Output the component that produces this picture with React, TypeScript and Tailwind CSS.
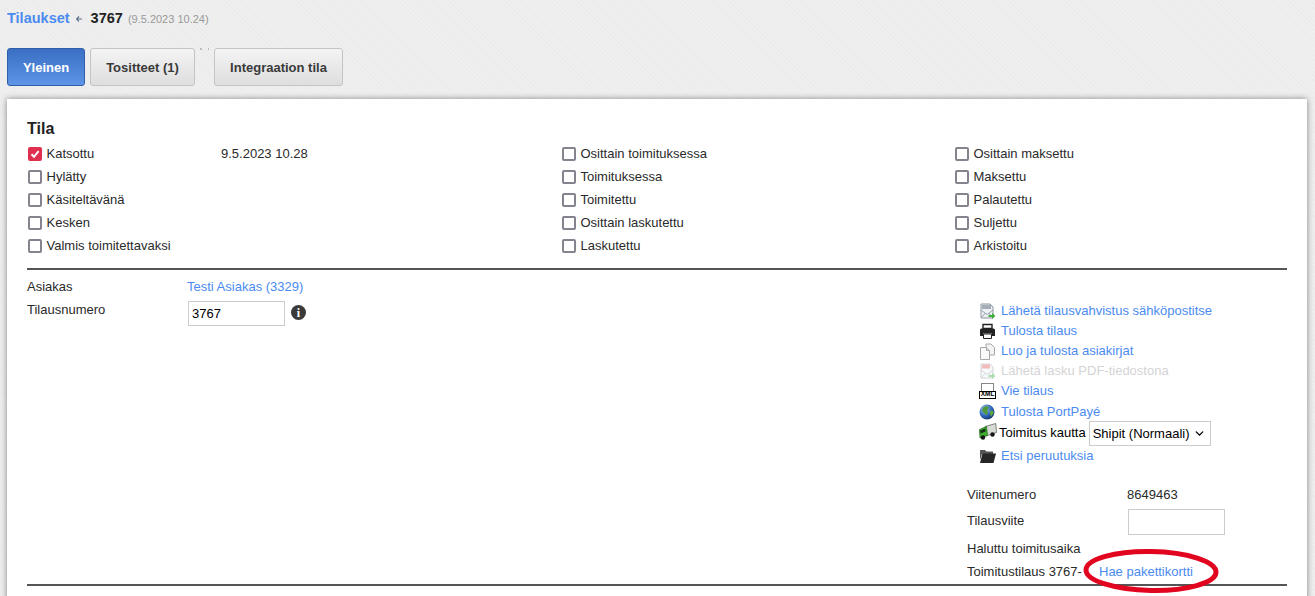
import { ReactNode } from "react";
import { ChevronDown } from "lucide-react";

const col1 = ["Katsottu", "Hylätty", "Käsiteltävänä", "Kesken", "Valmis toimitettavaksi"];
const col2 = ["Osittain toimituksessa", "Toimituksessa", "Toimitettu", "Osittain laskutettu", "Laskutettu"];
const col3 = ["Osittain maksettu", "Maksettu", "Palautettu", "Suljettu", "Arkistoitu"];

function Check({ label, checked }: { label: string; checked?: boolean }) {
  return (
    <div className="flex h-[23px] items-center">
      {checked ? (
        <span className="ml-px flex h-[14px] w-[14px] items-center justify-center rounded-[2px] bg-[#e0304f]">
          <svg width="10" height="10" viewBox="0 0 10 10">
            <path d="M1.5 5.2 4 7.8 8.6 2.2" fill="none" stroke="#fff" strokeWidth="2" />
          </svg>
        </span>
      ) : (
        <span className="ml-px h-[14px] w-[14px] rounded-[2px] border-2 border-[#86828e] bg-white" />
      )}
      <span className="ml-[4.5px] text-[13px] text-[#2a2a2a]">{label}</span>
    </div>
  );
}

function MailIcon({ faded }: { faded?: boolean }) {
  return (
    <svg width="17" height="17" viewBox="0 0 17 17" className={faded ? "opacity-40" : ""}>
      <path d="M2 1h9l3 3v11H2z" fill="#eef1f4" stroke="#8b95a0" />
      {faded ? <rect x="3" y="1.5" width="8" height="4" fill="#e05a5a" /> : <rect x="3" y="2" width="9" height="4" fill="#a4adb7" />}
      <path d="M2 7l6 4.500L14 7M2 15l4.500-5M14 15l-4.500-5" fill="none" stroke="#98a2ad" />
      <path d="M9.500 12h3.500v-2l3.500 3-3.500 3v-2H9.500z" fill="#3fae3f" />
    </svg>
  );
}

function PrinterIcon() {
  return (
    <svg width="17" height="17" viewBox="0 0 17 17">
      <path d="M4 1.500h9v4H4z" fill="#fff" stroke="#222" strokeWidth="1.4" />
      <path d="M2.500 5.500h12a1.500 1.500 0 0 1 1.500 1.500v6h-3v-2.500H4V13H1V7a1.500 1.500 0 0 1 1.500-1.500z" fill="#222" />
      <path d="M4.500 11h8v4.500h-8z" fill="#fff" stroke="#222" />
    </svg>
  );
}

function DocsIcon() {
  return (
    <svg width="17" height="17" viewBox="0 0 17 17">
      <path d="M7 1h5l3.500 3.500V12H7z" fill="#f4f4f4" stroke="#a8a8a8" />
      <path d="M1.500 4.500h6l3 3v9h-9z" fill="#fafafa" stroke="#a8a8a8" />
      <path d="M7.500 4.500v3h3" fill="#ddd" stroke="#a8a8a8" />
    </svg>
  );
}

function XmlIcon() {
  return (
    <div className="relative h-[17px] w-[17px]">
      <div className="absolute left-[2px] top-0 h-[10px] w-[13px] border border-[#888] bg-white" />
      <div className="absolute bottom-[1px] left-0 flex h-[8px] w-[17px] items-center justify-center border border-black bg-white text-[6.5px] font-bold leading-none text-black">
        XML
      </div>
    </div>
  );
}

function GlobeIcon() {
  return (
    <svg width="16" height="16" viewBox="0 0 16 16">
      <defs>
        <radialGradient id="globe" cx="0.35" cy="0.3" r="0.8">
          <stop offset="0" stopColor="#9cc4ef" />
          <stop offset="0.6" stopColor="#2b62b5" />
          <stop offset="1" stopColor="#12305f" />
        </radialGradient>
      </defs>
      <circle cx="8" cy="8" r="7.500" fill="url(#globe)" />
      <path d="M4 3.500 8 2l2 2-2 2.500 1 2-1.500 3L5.500 9 3 7z" fill="#4f9a3a" />
      <path d="M11 7l3-.5.5 3-2.500 3-1-2.500z" fill="#5ea544" />
    </svg>
  );
}

function TruckIcon() {
  return (
    <svg width="18" height="17" viewBox="0 0 18 17">
      <path d="M6 3.500 16.800.5 17.500 9.500 7 13z" fill="#d8dad4" stroke="#55584f" strokeWidth="0.7" />
      <path d="M.5 6.500 7.500 3.500 8.500 12.500 1 15z" fill="#3fb12c" stroke="#1c5f15" strokeWidth="0.7" />
      <path d="M1.200 7.500 6.300 5.500 6.600 8.600 1.600 10.400z" fill="#12301a" />
      <circle cx="4" cy="14.500" r="2.200" fill="#161616" />
      <circle cx="13.500" cy="11.500" r="2.200" fill="#161616" />
    </svg>
  );
}

function FolderIcon() {
  return (
    <svg width="17" height="17" viewBox="0 0 17 17">
      <path d="M1 2h5l1.500 1.500H14V6H3L1 12z" fill="#555" />
      <path d="M3.500 5.500H17L14.500 15H1z" fill="#262626" />
    </svg>
  );
}

function LinkRow({ icon, label, faded, className }: { icon: ReactNode; label: string; faded?: boolean; className?: string }) {
  return (
    <div className={`flex h-[20px] items-center ${className ?? ""}`}>
      <span className="flex w-[22px] shrink-0 items-center">{icon}</span>
      <a className={`text-[13px] ${faded ? "text-[#d4d4d4]" : "text-[#4b8bf0]"}`}>{label}</a>
    </div>
  );
}

function Tab({ label, active, className }: { label: string; active?: boolean; className?: string }) {
  return (
    <button
      className={`h-[38px] rounded-[3px] border pt-[2px] text-[13px] font-bold ${
        active
          ? "border-[#2f5fa8] bg-gradient-to-b from-[#3a6fc4] to-[#5e95e6] text-white"
          : "border-[#c4c4c4] bg-gradient-to-b from-[#f4f4f4] to-[#dedede] text-[#3a3a3a]"
      } ${className ?? ""}`}
    >
      {label}
    </button>
  );
}

export default function App() {
  return (
    <div className="relative h-[596px] overflow-hidden bg-[repeating-linear-gradient(45deg,#ebebeb_0,#ebebeb_1px,#efefef_1px,#efefef_3px)] font-['Liberation_Sans',Arial,sans-serif]">
      <div className="flex h-[38px] items-center pl-[7px]">
        <a className="text-[14.5px] font-bold text-[#4b8bf0]">Tilaukset</a>
        <svg width="6" height="6" viewBox="0 0 6 6" className="ml-[6px]">
          <path d="M3 .5 .5 3 3 5.500M.5 3H6" fill="none" stroke="#5a6f8a" strokeWidth="1.1" />
        </svg>
        <span className="ml-[9px] text-[14.5px] font-bold text-[#222]">3767</span>
        <span className="ml-[5px] mt-[1px] text-[11px] text-[#999]">(9.5.2023 10.24)</span>
      </div>

      <div className="mt-[10px] flex h-[38px] pl-[7px]">
        <Tab label="Yleinen" active className="w-[78px]" />
        <Tab label="Tositteet (1)" className="ml-[5px] w-[105px]" />
        <span className="ml-[5px] flex h-[2px] w-[9px] justify-between">
          <i className="h-[1.500px] w-[1.500px] bg-[#bbb]" />
          <i className="h-[1.500px] w-[1.500px] bg-[#bbb]" />
        </span>
        <Tab label="Integraation tila" className="ml-[5px] w-[129px]" />
      </div>

      <div className="ml-[7px] mt-[13px] w-[1300px] bg-white px-[20px] pb-[20px] pt-[20px] shadow-[0_0_6px_rgba(0,0,0,0.45)]">
        <h2 className="h-[23px] text-[16px] font-bold leading-[19px] text-[#222]">Tila</h2>

        <div className="flex h-[115px]">
          <div className="relative w-[534px]">
            {col1.map((label, i) => (
              <Check key={label} label={label} checked={i === 0} />
            ))}
            <span className="absolute left-[194px] top-[2px] text-[13px] text-[#2a2a2a]">9.5.2023 10.28</span>
          </div>
          <div className="w-[393px]">
            {col2.map((label) => (
              <Check key={label} label={label} />
            ))}
          </div>
          <div className="flex-1">
            {col3.map((label) => (
              <Check key={label} label={label} />
            ))}
          </div>
        </div>

        <div className="mt-[11px] h-[2px] bg-[#555]" />

        <div className="flex h-[314px]">
          <div className="w-[940px] pt-[9px] text-[13px] text-[#2a2a2a]">
            <div className="flex h-[16px] items-center">
              <span className="w-[160px]">Asiakas</span>
              <a className="text-[#4b8bf0]">Testi Asiakas (3329)</a>
            </div>
            <div className="mt-[6px] flex items-start">
              <span className="mt-px h-[16px] w-[161px] leading-[16px]">Tilausnumero</span>
              <input
                readOnly
                value="3767"
                className="h-[25px] w-[97px] border border-[#ccc] px-[3px] font-['Liberation_Sans',Arial,sans-serif] text-[13px] text-black"
              />
              <span className="ml-[6px] mt-[4px] flex h-[15px] w-[15px] items-center justify-center rounded-full bg-[#3a3a3a] font-['Liberation_Serif',serif] text-[12px] font-bold text-white">
                i
              </span>
            </div>
          </div>

          <div className="flex-1 pt-[31px] text-[13px] text-[#2a2a2a]">
            <div className="ml-[12px]">
              <LinkRow icon={<MailIcon />} label="Lähetä tilausvahvistus sähköpostitse" />
              <LinkRow icon={<PrinterIcon />} label="Tulosta tilaus" />
              <LinkRow icon={<DocsIcon />} label="Luo ja tulosta asiakirjat" />
              <LinkRow icon={<MailIcon faded />} label="Lähetä lasku PDF-tiedostona" faded />
              <LinkRow icon={<XmlIcon />} label="Vie tilaus" />
              <LinkRow icon={<GlobeIcon />} label="Tulosta PortPayé" className="mt-px" />
              <div className="-mt-px flex h-[25px] items-center">
                <span className="mb-[4px] w-[20px]">
                  <TruckIcon />
                </span>
                <span className="mb-px text-black">Toimitus kautta</span>
                <div className="ml-[3px] flex h-[25px] w-[122px] items-center justify-between border border-[#ccc] bg-white pl-[3px] pr-[4px] text-[13px] text-black">
                  Shipit (Normaali)
                  <ChevronDown size={13} strokeWidth={2.5} />
                </div>
              </div>
              <LinkRow icon={<FolderIcon />} label="Etsi peruutuksia" />
            </div>

            <div className="mt-[21px] flex h-[16px] items-center">
              <span className="w-[160px]">Viitenumero</span>
              <span>8649463</span>
            </div>
            <div className="mt-[6px] flex h-[26px] items-start">
              <span className="mt-[2px] w-[161px]">Tilausviite</span>
              <input readOnly className="h-[26px] w-[97px] border border-[#ccc]" />
            </div>
            <div className="mt-[6px] flex h-[16px] items-center">Haluttu toimitusaika</div>
            <div className="mt-[7px] flex h-[16px] items-center">
              <span className="w-[132px]">Toimitustilaus 3767-</span>
              <a className="text-[#4b8bf0]">Hae pakettikortti</a>
            </div>
          </div>
        </div>
        <div className="h-[2px] bg-[#555]" />
      </div>

      {/* hand drawn annotation on top of the screenshot */}
      <svg width="140" height="48" viewBox="0 0 140 48" className="absolute left-[1081px] top-[547px]">
        <ellipse cx="70" cy="24" rx="65" ry="19.5" fill="none" stroke="#e2051f" strokeWidth="5" transform="rotate(1 70 24)" />
      </svg>
    </div>
  );
}
